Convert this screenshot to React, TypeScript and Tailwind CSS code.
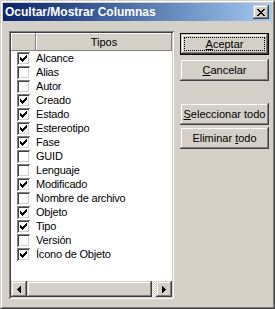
import React from 'react';

// classic 3D edges
const RAISED =
  'shadow-[inset_-1px_-1px_#404040,inset_1px_1px_#d4d0c8,inset_-2px_-2px_#808080,inset_2px_2px_#fff]';
const SUNKEN =
  'shadow-[inset_1px_1px_#808080,inset_-1px_-1px_#fff,inset_2px_2px_#404040,inset_-2px_-2px_#d4d0c8]';

const items: [string, boolean][] = [
  ['Alcance', true],
  ['Alias', false],
  ['Autor', false],
  ['Creado', true],
  ['Estado', true],
  ['Estereotipo', true],
  ['Fase', true],
  ['GUID', false],
  ['Lenguaje', false],
  ['Modificado', true],
  ['Nombre de archivo', false],
  ['Objeto', true],
  ['Tipo', true],
  ['Versión', false],
  ['Ícono de Objeto', true],
];

function CheckBox({ on }: { on: boolean }) {
  return (
    <div className={`w-[13px] h-[13px] bg-white shrink-0 flex items-start justify-start p-[3px] ${SUNKEN}`}>
      {on && (
        <svg width="7" height="7" viewBox="0 0 7 7" shapeRendering="crispEdges" className="block">
          <path
            fill="#000"
            d="M0 2h1v3H0z M1 3h1v3H1z M2 4h1v3H2z M3 3h1v3H3z M4 2h1v3H4z M5 1h1v3H5z M6 0h1v3H6z"
          />
        </svg>
      )}
    </div>
  );
}

function Arrow({ dir }: { dir: 'l' | 'r' }) {
  const d =
    dir === 'l'
      ? 'M0 3h1v1H0z M1 2h1v3H1z M2 1h1v5H2z M3 0h1v7H3z'
      : 'M0 0h1v7H0z M1 1h1v5H1z M2 2h1v3H2z M3 3h1v1H3z';
  return (
    <div className={`w-[16px] h-[16px] bg-[#d4d0c8] shrink-0 flex items-center justify-center ${RAISED}`}>
      <svg width="4" height="7" viewBox="0 0 4 7" shapeRendering="crispEdges" className="block">
        <path fill="#000" d={d} />
      </svg>
    </div>
  );
}

function Button({ children, primary, className = '' }: { children: React.ReactNode; primary?: boolean; className?: string }) {
  if (primary) {
    return (
      <div className={`w-[89px] h-[22px] border border-black ${className}`}>
        <div className={`relative w-full h-full bg-[#d4d0c8] flex items-center justify-center ${RAISED}`}>
          <div className="absolute inset-[3px] border border-dotted border-black" />
          <span className="relative">{children}</span>
        </div>
      </div>
    );
  }
  return (
    <div className={`w-[89px] h-[22px] bg-[#d4d0c8] flex items-center justify-center ${RAISED} ${className}`}>
      {children}
    </div>
  );
}

export default function App() {
  return (
    <div className="w-[275px] h-[309px] bg-[#d4d0c8] text-black text-[11px] leading-[14px] font-['Liberation_Sans',Arial,sans-serif] border border-t-[#d4d0c8] border-l-[#d4d0c8] border-r-[#404040] border-b-[#404040]">
      <div className="w-full h-full flex flex-col p-px border border-t-white border-l-white border-r-[#808080] border-b-[#808080]">
        {/* title bar */}
        <div className="h-[18px] shrink-0 flex items-center justify-between pl-[2px] pr-[3px] bg-gradient-to-r from-[#0a246a] to-[#a6caf0]">
          <span className="text-white font-bold text-[12px] leading-[16px]">Ocultar/Mostrar Columnas</span>
          <div className={`w-[16px] h-[14px] bg-[#d4d0c8] flex items-center justify-center ${RAISED}`}>
            <svg width="8" height="7" viewBox="0 0 8 7" shapeRendering="crispEdges" className="block">
              <path
                fill="#000"
                d="M0 0h2v1H0z M6 0h2v1H6z M1 1h2v1H1z M5 1h2v1H5z M2 2h4v1H2z M3 3h2v1H3z M2 4h4v1H2z M1 5h2v1H1z M5 5h2v1H5z M0 6h2v1H0z M6 6h2v1H6z"
              />
            </svg>
          </div>
        </div>

        {/* body */}
        <div className="flex pt-[10px] pl-[6px] gap-[6px]">
          {/* list */}
          <div className={`w-[165px] h-[268px] bg-white p-[2px] ${SUNKEN}`}>
            <div className="w-full h-full flex flex-col">
              <div className="h-[18px] flex shrink-0 bg-[#d4d0c8]">
                <div className="w-[25px] h-full shadow-[inset_-1px_-1px_#808080,inset_1px_1px_#fff]" />
                <div className="flex-1 h-full flex items-center justify-center shadow-[inset_-1px_-1px_#808080,inset_1px_1px_#fff]">
                  Tipos
                </div>
              </div>
              {items.map(([label, on]) => (
                <div key={label} className="h-[14px] flex items-center pl-[6px]">
                  <CheckBox on={on} />
                  <span className="ml-[6px] tracking-[-0.2px] whitespace-nowrap">{label}</span>
                </div>
              ))}
              <div className="flex-1" />
              {/* horizontal scrollbar */}
              <div className="h-[16px] flex shrink-0">
                <Arrow dir="l" />
                <div className={`w-[125px] h-full bg-[#d4d0c8] ${RAISED}`} />
                <div className="flex-1 h-full bg-[repeating-conic-gradient(#fff_0%_25%,#d4d0c8_0%_50%)] bg-[length:2px_2px]" />
                <Arrow dir="r" />
              </div>
            </div>
          </div>

          {/* buttons */}
          <div className="flex flex-col pt-[2px]">
            <Button primary>
              <span><span className="underline">A</span>ceptar</span>
            </Button>
            <Button className="mt-[4px]">
              <span><span className="underline">C</span>ancelar</span>
            </Button>
            <Button className="mt-[22px]">
              <span><span className="underline">S</span>eleccionar todo</span>
            </Button>
            <Button className="mt-[2px]">
              <span>Eliminar <span className="underline">t</span>odo</span>
            </Button>
          </div>
        </div>
      </div>
    </div>
  );
}
